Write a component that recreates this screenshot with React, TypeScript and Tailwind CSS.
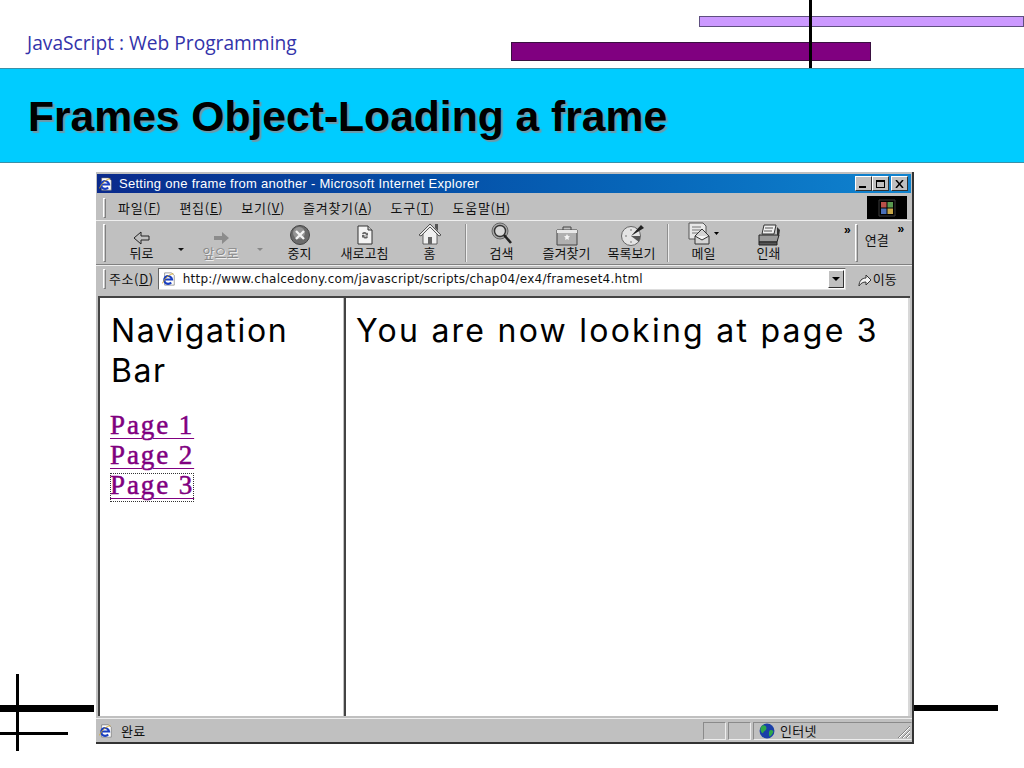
import React from "react";

const KR = "font-['Noto_Sans_CJK_KR','Noto_Sans',sans-serif]";

const IeIcon = ({ size = 14 }: { size?: number }) => (
  <svg width={size} height={size} viewBox="0 0 16 16">
    <path d="M3 1h8l3 3v11H3z" fill="#fff" stroke="#666" strokeWidth="0.7" />
    <path d="M3.500 8.500h8A4.500 4.500 0 1 0 10.500 12" fill="none" stroke="#1a3fc0" strokeWidth="2.400" />
    <path d="M0.500 13C3 7 9 2 13 2" fill="none" stroke="#d8a820" strokeWidth="1" />
  </svg>
);

const Back = () => (
  <svg width="20" height="16" viewBox="0 0 20 16">
    <path d="M9 2L2 8l7 6v-4h8V6H9z" fill="#c0c0c0" stroke="#222" strokeWidth="1" />
  </svg>
);

const Forward = () => (
  <svg width="20" height="16" viewBox="0 0 20 16">
    <path d="M11 2l7 6-7 6v-4H3V6h8z" fill="#8c8c8c" />
  </svg>
);

const Stop = () => (
  <svg width="22" height="22" viewBox="0 0 22 22">
    <circle cx="11" cy="11" r="9.500" fill="#6a6a6a" stroke="#444" />
    <circle cx="10" cy="9" r="6" fill="#949494" />
    <path d="M7 7l8 8M15 7l-8 8" stroke="#f4f4f4" strokeWidth="2.400" />
  </svg>
);

const Refresh = () => (
  <svg width="20" height="22" viewBox="0 0 20 22">
    <path d="M3 2h10l4 4v14H3z" fill="#f4f4f4" stroke="#333" />
    <path d="M13 2v4h4" fill="#ccc" stroke="#333" />
    <path d="M7 9.500c1-2 4-2 5 0l1-1v3h-3l1-1c-.7-1-2-1-3 0zM13 13c-1 2-4 2-5 0l-1 1v-3h3l-1 1c.7 1 2 1 3 0z" fill="#666" />
  </svg>
);

const Home = () => (
  <svg width="24" height="24" viewBox="0 0 24 24">
    <path d="M1 13L12 2l11 11-2 1-9-9-9 9z" fill="#e8e8e8" stroke="#333" strokeWidth="0.800" />
    <path d="M17 2h3v7l-3-3z" fill="#555" />
    <path d="M5 12l7-7 7 7v10H5z" fill="#f0f0f0" stroke="#444" strokeWidth="0.800" />
    <rect x="10" y="15" width="4" height="7" fill="#666" />
  </svg>
);

const Search = () => (
  <svg width="24" height="24" viewBox="0 0 24 24">
    <circle cx="10" cy="9" r="8" fill="#a8a8a8" stroke="#666" />
    <circle cx="10" cy="9" r="5.500" fill="#d8d8d8" stroke="#333" strokeWidth="1.400" />
    <path d="M14 13l7 8" stroke="#222" strokeWidth="2.600" />
  </svg>
);

const Favorites = () => (
  <svg width="24" height="22" viewBox="0 0 24 22">
    <path d="M2 6h20v15H2z" fill="#b0b0b0" stroke="#444" />
    <path d="M8 6V3h8v3" fill="none" stroke="#444" />
    <path d="M2 6h20v3H2z" fill="#e8e8e8" />
    <path d="M12 10l1 2 2 .3-1.500 1.500.4 2.200-1.900-1-1.900 1 .4-2.200L9 12.300l2-.3z" fill="#f4f4f4" />
  </svg>
);

const History = () => (
  <svg width="26" height="22" viewBox="0 0 26 22">
    <circle cx="12" cy="12" r="9.500" fill="#e4e4e4" stroke="#666" />
    <path d="M12 12L22 1l3 3z" fill="#222" />
    <path d="M12 12l8 6a10 10 0 0 0 1-6z" fill="#555" />
    <path d="M12 5v2M6 12h2M12 17v2" stroke="#777" />
  </svg>
);

const Mail = () => (
  <svg width="32" height="24" viewBox="0 0 32 24">
    <path d="M1 1h14l3 3v13H1z" fill="#e8e8e8" stroke="#555" />
    <path d="M4 5h9M4 8h9M4 11h6" stroke="#777" />
    <path d="M7 14l7-7 7 7v8H7z" fill="#d4d4d4" stroke="#333" />
    <path d="M7 14l7 4 7-4" fill="#f4f4f4" stroke="#333" />
    <path d="M26 10h5l-2.500 3z" fill="#000" />
  </svg>
);

const Printer = () => (
  <svg width="24" height="22" viewBox="0 0 24 22">
    <path d="M7 1h12l-2 9H5z" fill="#f0f0f0" stroke="#333" />
    <path d="M8 4h8M7 7h8" stroke="#555" />
    <path d="M2 11h20l-2 7H2z" fill="#9a9a9a" stroke="#222" />
    <path d="M2 18h18v3H2z" fill="#555" stroke="#222" />
    <path d="M20 3l3 3-1 6-2-1z" fill="#333" />
  </svg>
);

const Globe = () => (
  <svg width="16" height="16" viewBox="0 0 15 15">
    <circle cx="7.500" cy="7.500" r="7" fill="#1a3fa8" />
    <path d="M4 2c2 0 3 1 3 3S5 7 4 9 1 7 1.500 5 3 2 4 2zM10 7c2-1 3 0 3.500 1-.5 2-2 4-3.500 5-1-2-1-4 0-6z" fill="#2ea84a" />
  </svg>
);

const Flag = () => (
  <svg width="18" height="18" viewBox="0 0 18 18">
    <rect x="3" y="3" width="5.500" height="5.500" fill="#b8504a" />
    <rect x="9.500" y="3" width="5.500" height="5.500" fill="#5a9a50" />
    <rect x="3" y="9.500" width="5.500" height="5.500" fill="#4a70b8" />
    <rect x="9.500" y="9.500" width="5.500" height="5.500" fill="#c8a848" />
    <path d="M1 1h16v16H1z" fill="none" stroke="#3a3a3a" />
  </svg>
);

const Caption = ({ children }: { children: React.ReactNode }) => (
  <div className="w-[17px] h-[15px] bg-[#c0c0c0] border-t border-l border-white border-r border-b border-r-[#333] border-b-[#333] flex items-center justify-center">
    {children}
  </div>
);

const ToolButton = ({
  icon,
  label,
  disabled,
}: {
  icon: React.ReactNode;
  label: string;
  disabled?: boolean;
}) => (
  <div className="w-[65px] h-full flex flex-col items-center justify-end pb-[4px]">
    <div className="h-[24px] flex items-end justify-center">{icon}</div>
    <span
      className={`text-[13px] leading-[14px] ${
        disabled ? "text-[#8a8a8a] [text-shadow:1px_1px_0_#eee]" : "text-[#111]"
      }`}
    >
      {label}
    </span>
  </div>
);

const Caret = ({ color }: { color: string }) => (
  <div className="w-[14px] flex justify-center pb-[13px]">
    <span
      className="w-0 h-0 border-l-[3px] border-r-[3px] border-t-[3px] border-l-transparent border-r-transparent"
      style={{ borderTopColor: color }}
    />
  </div>
);

const Sep = () => <div className="w-[2px] h-[38px] ml-[3px] mr-[2px] bg-[#8f8f8f] border-r border-[#eee]" />;

const Grip = ({ h }: { h: string }) => (
  <div className={`w-[3px] ${h} bg-[#c8c8c8] border border-white border-r-[#808080] border-b-[#808080]`} />
);

const StatusCell = ({ w }: { w: string }) => (
  <div className={`${w} h-[18px] border border-[#8a8a8a] border-r-[#eee] border-b-[#eee]`} />
);

const Link = ({ children, focus }: { children: string; focus?: boolean }) => (
  <div className="h-[30px]">
    <span
      className={`inline-block h-[29px] mt-[3px] leading-[25px] text-[#800080] ${
        focus ? "outline-1 outline-dotted outline-[#333] -outline-offset-1" : ""
      } font-['Liberation_Serif',serif] text-[27px] tracking-[1.9px] underline underline-offset-[4px] decoration-1 [-webkit-text-stroke:0.5px_#800080]`}
    >
      {children}
    </span>
  </div>
);

export default function App() {
  const menus: [string, string][] = [
    ["파일", "F"],
    ["편집", "E"],
    ["보기", "V"],
    ["즐겨찾기", "A"],
    ["도구", "T"],
    ["도움말", "H"],
  ];

  return (
    <div className="relative w-[1024px] h-[768px] overflow-hidden bg-white">
      {/* slide decoration */}
      <div className="absolute left-[699px] top-[16px] w-[325px] h-[11px] bg-[#cc99ff] border border-[#5f4f80]" />
      <div className="absolute left-[511px] top-[42px] w-[360px] h-[19px] bg-[#800080] border border-[#3a1040]" />
      <div className="absolute left-[809px] top-0 w-[3px] h-[68px] bg-black" />
      <div className="absolute left-0 top-[705px] w-[94px] h-[7px] bg-black" />
      <div className="absolute left-0 top-[732px] w-[68px] h-[3px] bg-black" />
      <div className="absolute left-[16px] top-[674px] w-[3px] h-[77px] bg-black" />
      <div className="absolute left-[914px] top-[705px] w-[84px] h-[6px] bg-black" />

      <div className="h-[68px] pl-[27px] pt-[29px]">
        <span className="block font-['Open_Sans',sans-serif] text-[19.2px] leading-[28px] text-[#3333aa]">
          JavaScript : Web Programming
        </span>
      </div>
      <div className="h-[95px] bg-[#00ccff] border-t border-b border-[#3a90a8] pl-[28px] pt-[2px] flex items-center">
        <h1 className="font-['Liberation_Sans',sans-serif] font-bold text-[42.6px] text-black [text-shadow:2px_2px_1px_#6f98a8]">
          Frames Object-Loading a frame
        </h1>
      </div>

      {/* browser window */}
      <div className={`relative ml-[96px] mt-[9px] w-[818px] h-[572px] bg-[#c0c0c0] border-r-2 border-b-2 border-[#333] flex flex-col ${KR}`}>
        <div className="mx-[1px] mt-[2px] h-[19px] shrink-0 bg-gradient-to-r from-[#0a2a8c] to-[#1084d0] flex items-center pl-[2px] pr-[3px]">
          <IeIcon />
          <span className="ml-[6px] font-['Liberation_Sans',sans-serif] text-[13px] text-white tracking-[0.27px]">
            Setting one frame from another - Microsoft Internet Explorer
          </span>
          <div className="ml-auto flex">
            <Caption>
              <span className="w-[7px] h-[2px] bg-black mt-[7px] mr-[2px]" />
            </Caption>
            <Caption>
              <span className="w-[9px] h-[8px] border border-t-2 border-black" />
            </Caption>
            <div className="ml-[2px]">
              <Caption>
                <svg width="9" height="8" viewBox="0 0 9 8">
                  <path d="M1 0l7 8M8 0L1 8" stroke="#000" strokeWidth="1.500" />
                </svg>
              </Caption>
            </div>
          </div>
        </div>

        <div className="h-[28px] shrink-0 flex items-end pb-[1px] pl-[7px] border-b border-[#eee]">
          <div className="self-center mt-[3px]">
            <Grip h="h-[20px]" />
          </div>
          <div className="ml-[12px] mb-[2px] flex gap-[18px] text-[13px] leading-[18px] tracking-[0.7px] text-[#111]">
            {menus.map(([name, key]) => (
              <span key={key}>
                {name}(<u>{key}</u>)
              </span>
            ))}
          </div>
          <div className="ml-auto mr-[5px] w-[40px] h-[23px] bg-black flex items-center justify-center">
            <Flag />
          </div>
        </div>

        <div className="relative h-[44px] shrink-0 flex items-end pl-[7px] border-b border-[#808080]">
          <div className="self-center">
            <Grip h="h-[38px]" />
          </div>
          <div className="ml-[3px] h-full flex items-end">
            <ToolButton icon={<Back />} label="뒤로" />
            <Caret color="#111" />
            <ToolButton icon={<Forward />} label="앞으로" disabled />
            <Caret color="#888" />
            <ToolButton icon={<Stop />} label="중지" />
            <ToolButton icon={<Refresh />} label="새로고침" />
            <ToolButton icon={<Home />} label="홈" />
            <div className="self-center">
              <Sep />
            </div>
            <ToolButton icon={<Search />} label="검색" />
            <ToolButton icon={<Favorites />} label="즐겨찾기" />
            <ToolButton icon={<History />} label="목록보기" />
            <div className="self-center">
              <Sep />
            </div>
            <ToolButton icon={<Mail />} label="메일" />
            <ToolButton icon={<Printer />} label="인쇄" />
          </div>
          <span className="ml-[43px] mt-[1px] self-start font-['Liberation_Sans',sans-serif] text-[12px] font-bold leading-[16px]">
            »
          </span>
          <div className="ml-[4px] self-center">
            <Grip h="h-[38px]" />
          </div>
          <span className="ml-[7px] mb-[6px] self-center text-[13px] text-[#111]">연결</span>
          <span className="ml-[9px] self-start font-['Liberation_Sans',sans-serif] text-[12px] font-bold leading-[16px]">
            »
          </span>
        </div>

        <div className="h-[27px] shrink-0 flex items-center pl-[7px] border-t border-[#eee]">
          <Grip h="h-[20px]" />
          <span className="ml-[3px] text-[13px] tracking-[0.6px] text-[#111]">
            주소(<u>D</u>)
          </span>
          <div className="ml-[4px] w-[688px] h-[22px] bg-white border border-[#666] border-r-[#ddd] border-b-[#ddd] flex items-center pl-[3px] pr-[1px]">
            <IeIcon />
            <span className="ml-[7px] font-['DejaVu_Sans',sans-serif] text-[12px] tracking-[0.25px] text-[#111]">
              http://www.chalcedony.com/javascript/scripts/chap04/ex4/frameset4.html
            </span>
            <div className="ml-auto w-[16px] h-[18px] bg-[#c0c0c0] border border-white border-r-[#333] border-b-[#333] flex items-center justify-center">
              <span className="w-0 h-0 border-l-[4px] border-r-[4px] border-t-[4px] border-l-transparent border-r-transparent border-t-black" />
            </div>
          </div>
          <svg className="ml-[11px]" width="15" height="15" viewBox="0 0 15 15">
            <path d="M2 14c0-5 3-8 7-8V3l5 5-5 5v-3c-3 0-5 1-7 4z" fill="#f4f4f4" stroke="#333" />
          </svg>
          <span className="ml-[1px] text-[13px] text-[#111]">이동</span>
        </div>

        <div className="flex-1 min-h-0 mx-[2px] mt-[4px] flex border-t-2 border-l-2 border-[#444]">
          <div className="w-[243px] bg-white pl-[11px] pt-[13px]">
            <div className="font-['Inter',sans-serif] font-normal text-[32px] leading-[40px] tracking-[1.6px] text-black">
              Navigation
              <br />
              Bar
            </div>
            <div className="mt-[19px] -ml-[1px]">
              <Link>Page 1</Link>
              <Link>Page 2</Link>
              <Link focus>Page 3</Link>
            </div>
          </div>
          <div className="w-[3px] bg-[#c0c0c0] border-r-2 border-[#444]" />
          <div className="flex-1 bg-white pl-[10px] pt-[13px]">
            <div className="font-['Inter',sans-serif] font-normal text-[32px] leading-[40px] tracking-[2.25px] text-black">
              You are now looking at page 3
            </div>
          </div>
          <div className="w-[2px] bg-[#d8d8d8]" />
        </div>

        <div className="h-[24px] shrink-0 mt-[2px] flex items-center pl-[3px] border-t border-[#eee]">
          <IeIcon />
          <span className="ml-[8px] text-[13px] tracking-[0.3px] text-[#111]">완료</span>
          <div className="ml-auto flex items-center gap-[2px]">
            <StatusCell w="w-[23px]" />
            <StatusCell w="w-[23px]" />
            <div className="w-[159px] h-[18px] border border-[#8a8a8a] border-r-[#c0c0c0] border-b-[#eee] flex items-center pl-[5px]">
              <Globe />
              <span className="ml-[5px] text-[13px] tracking-[0.3px] text-[#111]">인터넷</span>
              <svg className="ml-auto" width="14" height="16" viewBox="0 0 14 16">
                <path d="M13 3L1 15M13 7l-8 8M13 11l-4 4" stroke="#808080" />
                <path d="M13 4L2 15M13 8l-7 7M13 12l-3 3" stroke="#fff" />
              </svg>
            </div>
          </div>
        </div>
      </div>
    </div>
  );
}
